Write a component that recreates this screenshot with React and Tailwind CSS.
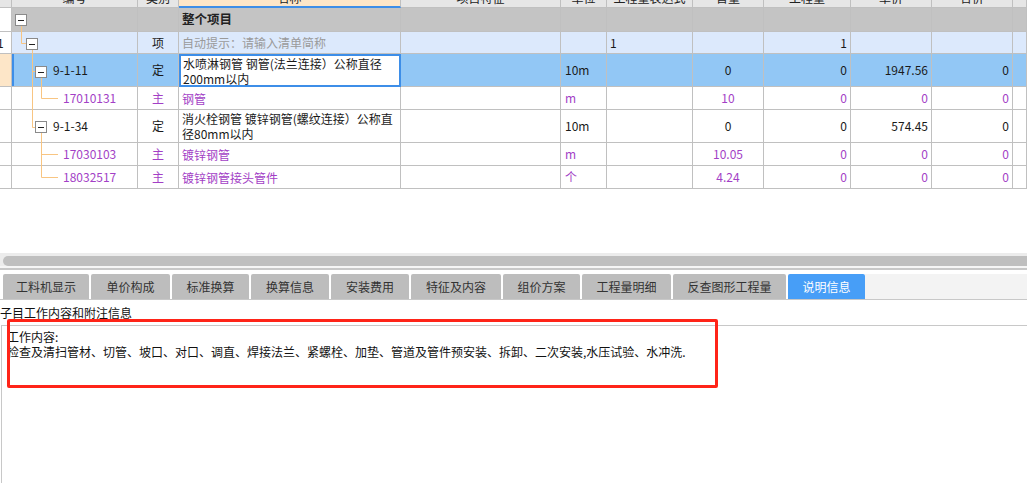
import React from 'react';

const COLS = [
    'w-[12px]',
    'w-[126px]',
    'w-[41px]',
    'w-[222px]',
    'w-[160px]',
    'w-[46px]',
    'w-[86px]',
    'w-[71px]',
    'w-[87px]',
    'w-[81px]',
    'w-[81px]',
    'w-[14px]',
];

const GRID = 'border-r border-b border-[#c0c0c0]';
const PURPLE = 'text-[#a33fc6]';

const Cell = ({ i, className = '', bd = GRID, children }) => (
    <div className={`${COLS[i]} shrink-0 h-full flex items-center overflow-hidden whitespace-nowrap ${bd} ${className}`}>
        {children}
    </div>
);

const headers = ['', '编号', '类别', '名称', '项目特征', '单位', '工程量表达式', '含量', '工程量', '单价', '合价', ''];

const tabs = [
    { label: '工料机显示', w: 'w-[86px]' },
    { label: '单价构成', w: 'w-[79px]' },
    { label: '标准换算', w: 'w-[77px]' },
    { label: '换算信息', w: 'w-[78px]' },
    { label: '安装费用', w: 'w-[78px]' },
    { label: '特征及内容', w: 'w-[90px]' },
    { label: '组价方案', w: 'w-[77px]' },
    { label: '工程量明细', w: 'w-[89px]' },
    { label: '反查图形工程量', w: 'w-[113px]' },
    { label: '说明信息', w: 'w-[77px]', active: true },
];

const Row = ({ h, bg, code, codePad, type, name, unit, content, qty, price, total, purple }) => {
    const tc = purple ? PURPLE : 'text-[#1a1a1a]';
    return (
        <div className={`flex ${h} ${bg} ${tc}`}>
            <Cell i={0} className="bg-white" />
            <Cell i={1} className={codePad}>{code}</Cell>
            <Cell i={2} className="justify-center">{type}</Cell>
            <Cell i={3} className="pl-[3px] whitespace-normal leading-[15px]">{name}</Cell>
            <Cell i={4} />
            <Cell i={5} className="pl-[4px]">{unit}</Cell>
            <Cell i={6} />
            <Cell i={7} className="justify-center">{content}</Cell>
            <Cell i={8} className="justify-end pr-[3px]">{qty}</Cell>
            <Cell i={9} className="justify-end pr-[3px]">{price}</Cell>
            <Cell i={10} className="justify-end pr-[3px]">{total}</Cell>
            <Cell i={11} />
        </div>
    );
};

const TreeBox = ({ x, y }) => (
    <g>
        <rect x={x + 0.5} y={y + 0.5} width="11" height="11" fill="#fff" stroke="#8a8a8a" />
        <path d={`M${x + 3} ${y + 6.5} H${x + 9}`} stroke="#222" />
    </g>
);

const App = () => {
    return (
        <div className="relative w-[1027px] h-[483px] overflow-hidden bg-white text-[12px] font-['Noto_Sans_CJK_SC','Liberation_Sans',sans-serif]">
            {/* grid */}
            <div className="relative">
                <div className="flex h-[8px] bg-[#e6e6e6] text-[#222]">
                    {headers.map((t, i) => (
                        <Cell
                            key={i}
                            i={i}
                            className={`items-start justify-center ${i === 3 ? 'bg-[#fde6c8]' : ''}`}
                            bd={i === 3 ? 'border-r border-b-2 border-r-[#c0c0c0] border-b-[#3d8ee8]' : GRID}
                        >
                            <span className="mt-[-8px] leading-[12px]">{t}</span>
                        </Cell>
                    ))}
                </div>

                <div className="flex h-[24px] bg-[#c4c4c4] text-[#222]">
                    <Cell i={0} className="bg-white" />
                    <Cell i={1} />
                    <Cell i={2} />
                    <Cell i={3} className="pl-[3px] font-bold text-[12.5px]">整个项目</Cell>
                    {[4, 5, 6, 7, 8, 9, 10, 11].map((i) => <Cell key={i} i={i} />)}
                </div>

                <div className="flex h-[22px] bg-[#dce9fc] text-[#1a1a1a]">
                    <Cell i={0} className="bg-white"><span className="ml-[-3px]">1</span></Cell>
                    <Cell i={1} />
                    <Cell i={2} className="justify-center">项</Cell>
                    <Cell i={3} className="pl-[3px] text-[#9a9a9a]">自动提示：请输入清单简称</Cell>
                    <Cell i={4} />
                    <Cell i={5} />
                    <Cell i={6} className="pl-[3px]">1</Cell>
                    <Cell i={7} />
                    <Cell i={8} className="justify-end pr-[3px]">1</Cell>
                    <Cell i={9} />
                    <Cell i={10} />
                    <Cell i={11} />
                </div>

                <div className="flex h-[33px] bg-[#92c7f5] text-[#1a1a1a]">
                    <Cell i={0} className="bg-[#fde6c8]" />
                    <Cell i={1} className="pl-[41px] shadow-[inset_2px_0_0_#3d8ee8]">9-1-11</Cell>
                    <Cell i={2} className="justify-center">定</Cell>
                    <Cell i={3} className="bg-white pl-[2px] whitespace-normal leading-[15px]" bd="border-2 border-[#3d8ee8]">
                        <span>水喷淋钢管 钢管(法兰连接）公称直径<br />200mm以内</span>
                    </Cell>
                    <Cell i={4} />
                    <Cell i={5} className="pl-[4px]">10m</Cell>
                    <Cell i={6} />
                    <Cell i={7} className="justify-center">0</Cell>
                    <Cell i={8} className="justify-end pr-[3px]">0</Cell>
                    <Cell i={9} className="justify-end pr-[3px]">1947.56</Cell>
                    <Cell i={10} className="justify-end pr-[3px]">0</Cell>
                    <Cell i={11} />
                </div>

                <Row h="h-[23px]" bg="bg-white" code="17010131" codePad="pl-[51px]" type="主" name="钢管" unit="m" content="10" qty="0" price="0" total="0" purple />
                <Row
                    h="h-[33px]"
                    bg="bg-white"
                    code="9-1-34"
                    codePad="pl-[41px]"
                    type="定"
                    name={<span>消火栓钢管 镀锌钢管(螺纹连接）公称直<br />径80mm以内</span>}
                    unit="10m"
                    content="0"
                    qty="0"
                    price="574.45"
                    total="0"
                />
                <Row h="h-[23px]" bg="bg-white" code="17030103" codePad="pl-[51px]" type="主" name="镀锌钢管" unit="m" content="10.05" qty="0" price="0" total="0" purple />
                <Row h="h-[23px]" bg="bg-white" code="18032517" codePad="pl-[51px]" type="主" name="镀锌钢管接头管件" unit="个" content="4.24" qty="0" price="0" total="0" purple />

                {/* tree connectors */}
                <svg className="absolute left-0 top-0 pointer-events-none" width="140" height="190" viewBox="0 0 140 190">
                    <g stroke="#f8c582" fill="none">
                        <path d="M21.5 26 V43.5 H26" />
                        <path d="M32.5 49 V127.5 H35 M32.5 71.5 H35" />
                        <path d="M41.5 77 V98.5 H58" />
                        <path d="M41.5 133 V177.5 H58 M41.5 154.5 H58" />
                    </g>
                    <TreeBox x={15} y={14} />
                    <TreeBox x={26} y={38} />
                    <TreeBox x={35} y={66} />
                    <TreeBox x={35} y={121} />
                </svg>
            </div>

            <div className="h-[64px]" />

            {/* horizontal scrollbar */}
            <div className="h-[3px] bg-[#ececec]" />
            <div className="h-[10px] bg-[#ececec] pl-[3px]">
                <div className="h-full w-[1040px] rounded-full bg-[#bfbfbf]" />
            </div>
            <div className="h-[2px] bg-[#f6f6f6]" />
            <div className="h-[2px] bg-[#c8c8c8]" />
            <div className="h-[4px] bg-white" />

            {/* tabs */}
            <div className="flex h-[26px] border-b border-[#c8c8c8] bg-white pl-[3px]">
                <div className="flex gap-[2px]">
                    {tabs.map((t) => (
                        <div
                            key={t.label}
                            className={`${t.w} h-full flex items-center justify-center rounded-t-[2px] text-[12px] ${t.active ? 'bg-[#479ef7] text-white' : 'bg-[#bdbdbd] text-[#333]'}`}
                        >
                            {t.label}
                        </div>
                    ))}
                </div>
                <div className="flex-1 bg-[#f3f3f3]" />
            </div>

            <div className="h-[25px] pt-[5px] leading-[16px] text-[#111]">子目工作内容和附注信息</div>

            <div className="h-[160px] border-t border-l border-[#c8c8c8] ml-[1px] pt-[3px] pl-[5px] leading-[15px] text-[#111]">
                <div>工作内容:</div>
                <div>检查及清扫管材、切管、坡口、对口、调直、焊接法兰、紧螺栓、加垫、管道及管件预安装、拆卸、二次安装,水压试验、水冲洗.</div>
            </div>

            {/* red annotation frame */}
            <div className="absolute left-[7px] top-[319px] w-[711px] h-[69px] border-[3px] border-[#ff2418] rounded-[2px] pointer-events-none" />
        </div>
    );
};

export default App;
